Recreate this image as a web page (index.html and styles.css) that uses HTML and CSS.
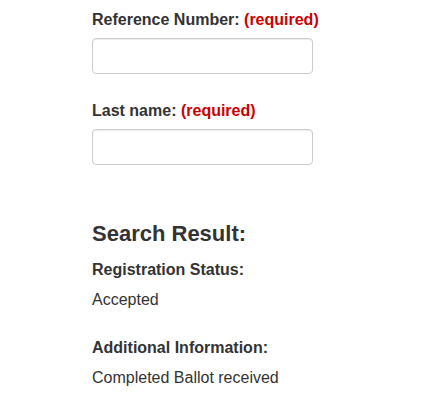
FILE: index.html
```html
<!DOCTYPE html>
<html>
<head>
<meta charset="utf-8">
<link rel="stylesheet" href="styles.css">
</head>
<body>
<main class="page">
  <form class="lookup">
    <div class="field">
      <label class="field-label" for="ref">Reference Number: <span class="req">(required)</span></label>
      <input class="field-input" id="ref" type="text">
    </div>
    <div class="field">
      <label class="field-label" for="last">Last name: <span class="req">(required)</span></label>
      <input class="field-input" id="last" type="text">
    </div>
  </form>
  <section class="result">
    <h3 class="result-title">Search Result:</h3>
    <div class="result-item">
      <div class="result-label">Registration Status:</div>
      <div class="result-value">Accepted</div>
    </div>
    <div class="result-item">
      <div class="result-label">Additional Information:</div>
      <div class="result-value">Completed Ballot received</div>
    </div>
  </section>
</main>
</body>
</html>
```

FILE: styles.css
```css
* { box-sizing: border-box; }
html, body { margin: 0; padding: 0; background: #fff; }
body {
  font-family: "Liberation Sans", Arial, sans-serif;
  font-size: 16px;
  line-height: 20px;
  color: #333;
}
.page {
  padding: 10px 0 0 92px;
}
.lookup {
  display: flex;
  flex-direction: column;
  gap: 27px;
}
.field {
  display: flex;
  flex-direction: column;
  gap: 8px;
}
.field-label {
  font-weight: bold;
  display: block;
}
.req { color: #c00; }
.field-input {
  width: 221px;
  height: 36px;
  border: 1px solid #ccc;
  border-radius: 4px;
  background: #fff;
  box-shadow: inset 0 1px 1px rgba(0,0,0,0.075);
  padding: 6px 12px;
  font: inherit;
}
.result {
  margin-top: 57px;
}
.result-title {
  margin: 0 0 14px;
  font-size: 22px;
  line-height: 24px;
  font-weight: bold;
}
.result-item + .result-item { margin-top: 28px; }
.result-label { font-weight: bold; margin-bottom: 10px; }
```
